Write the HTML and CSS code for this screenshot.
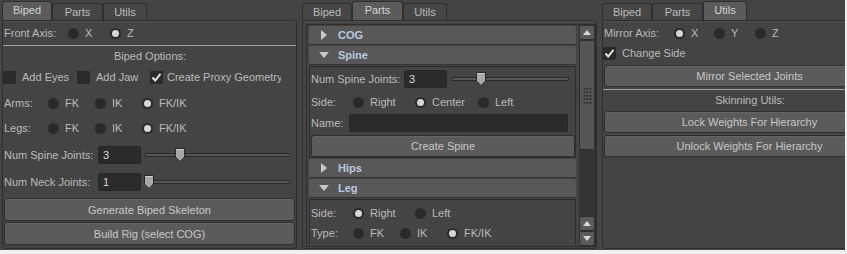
FILE: index.html
```html
<!DOCTYPE html>
<html lang="en">
<head>
    <meta charset="UTF-8">
    <title>Rig Tools</title>
    <link rel="stylesheet" href="styles.css">
</head>
<body>
<div class="app">

    <!-- Biped tab -->
    <div class="panel">
        <div class="tabs">
            <div class="tab active w-biped">Biped</div>
            <div class="tab w-parts">Parts</div>
            <div class="tab w-utils">Utils</div>
        </div>
        <div class="pane">
            <div class="row mt2">
                <span class="lbl w64">Front Axis:</span>
                <span class="opt w42"><span class="radio"></span>X</span>
                <span class="opt w42"><span class="radio on"></span>Z</span>
            </div>
            <div class="sep mt2"></div>
            <div class="row center">Biped Options:</div>
            <div class="row mt1 pl0">
                <span class="opt w74"><span class="check"></span>Add Eyes</span>
                <span class="opt w73"><span class="check"></span>Add Jaw</span>
                <span class="opt clip"><span class="check on"><svg width="13" height="13" viewBox="0 0 13 13"><path d="M2.5 6.5 L5.2 9.5 L10.5 2.8" fill="none" stroke="#e6e6e6" stroke-width="2"/></svg></span>Create Proxy Geometry</span>
            </div>
            <div class="row mt6">
                <span class="lbl w44">Arms:</span>
                <span class="opt w47"><span class="radio"></span>FK</span>
                <span class="opt w47"><span class="radio"></span>IK</span>
                <span class="opt"><span class="radio on"></span>FK/IK</span>
            </div>
            <div class="row mt5">
                <span class="lbl w44">Legs:</span>
                <span class="opt w47"><span class="radio"></span>FK</span>
                <span class="opt w47"><span class="radio"></span>IK</span>
                <span class="opt"><span class="radio on"></span>FK/IK</span>
            </div>
            <div class="row mt7">
                <span class="lbl w94">Num Spine Joints:</span>
                <span class="field num">3</span>
                <div class="slider s-left">
                    <div class="groove"></div>
                    <svg class="handle" style="left: 31px" width="10" height="14" viewBox="0 0 10 14"><path d="M0.5 0.5 H9.5 V9 L5 13.5 L0.5 9 Z" fill="#a8a8a8" stroke="#2a2a2a"/><path d="M1.5 1.5 H8.5" stroke="#d0d0d0"/></svg>
                </div>
            </div>
            <div class="row mt7">
                <span class="lbl w94">Num Neck Joints:</span>
                <span class="field num">1</span>
                <div class="slider s-left">
                    <div class="groove"></div>
                    <svg class="handle" style="left: 0px" width="10" height="14" viewBox="0 0 10 14"><path d="M0.5 0.5 H9.5 V9 L5 13.5 L0.5 9 Z" fill="#a8a8a8" stroke="#2a2a2a"/><path d="M1.5 1.5 H8.5" stroke="#d0d0d0"/></svg>
                </div>
            </div>
            <button class="btn mt6">Generate Biped Skeleton</button>
            <button class="btn mt1">Build Rig (select COG)</button>
        </div>
    </div>

    <!-- Parts tab -->
    <div class="panel">
        <div class="tabs">
            <div class="tab w-biped">Biped</div>
            <div class="tab active w-parts">Parts</div>
            <div class="tab w-utils">Utils</div>
        </div>
        <div class="pane">
            <div class="scrollbox">
                <div class="frames">
                    <div class="fhead"><svg width="6" height="10" viewBox="0 0 6 10"><path d="M0 0 L6 5 L0 10 Z" fill="#c8c8c8"/></svg>COG</div>
                    <div class="fhead"><svg width="10" height="6" viewBox="0 0 10 6"><path d="M0 0 H10 L5 6 Z" fill="#c8c8c8"/></svg>Spine</div>
                    <div class="fbody">
                        <div class="row mt2">
                            <span class="lbl w93">Num Spine Joints:</span>
                            <span class="field num">3</span>
                            <div class="slider s-mid">
                                <div class="groove"></div>
                                <svg class="handle" style="left: 25px" width="10" height="14" viewBox="0 0 10 14"><path d="M0.5 0.5 H9.5 V9 L5 13.5 L0.5 9 Z" fill="#a8a8a8" stroke="#2a2a2a"/><path d="M1.5 1.5 H8.5" stroke="#d0d0d0"/></svg>
                            </div>
                        </div>
                        <div class="row mt3">
                            <span class="lbl w42">Side:</span>
                            <span class="opt w62"><span class="radio"></span>Right</span>
                            <span class="opt w63"><span class="radio on"></span>Center</span>
                            <span class="opt"><span class="radio"></span>Left</span>
                        </div>
                        <div class="row mt1">
                            <span class="lbl w38">Name:</span>
                            <span class="field name"></span>
                        </div>
                        <button class="btn btn-small mt2">Create Spine</button>
                    </div>
                    <div class="fhead"><svg width="6" height="10" viewBox="0 0 6 10"><path d="M0 0 L6 5 L0 10 Z" fill="#c8c8c8"/></svg>Hips</div>
                    <div class="fhead"><svg width="10" height="6" viewBox="0 0 10 6"><path d="M0 0 H10 L5 6 Z" fill="#c8c8c8"/></svg>Leg</div>
                    <div class="fbody open">
                        <div class="row mt3">
                            <span class="lbl w42">Side:</span>
                            <span class="opt w62"><span class="radio on"></span>Right</span>
                            <span class="opt"><span class="radio"></span>Left</span>
                        </div>
                        <div class="row">
                            <span class="lbl w42">Type:</span>
                            <span class="opt w47"><span class="radio"></span>FK</span>
                            <span class="opt w47"><span class="radio"></span>IK</span>
                            <span class="opt"><span class="radio on"></span>FK/IK</span>
                        </div>
                        <div class="row"></div>
                    </div>
                </div>
                <div class="sbar">
                    <div class="sb-btn"><svg width="8" height="5" viewBox="0 0 8 5"><path d="M0 5 L4 0 L8 5 Z" fill="#d8d8d8"/></svg></div>
                    <div class="sb-thumb"><div class="grip"></div></div>
                    <div class="sb-track"></div>
                    <div class="sb-btn"><svg width="8" height="5" viewBox="0 0 8 5"><path d="M0 5 L4 0 L8 5 Z" fill="#d8d8d8"/></svg></div>
                    <div class="sb-btn"><svg width="8" height="5" viewBox="0 0 8 5"><path d="M0 0 L8 0 L4 5 Z" fill="#d8d8d8"/></svg></div>
                </div>
            </div>
        </div>
    </div>

    <!-- Utils tab -->
    <div class="panel">
        <div class="tabs">
            <div class="tab w-biped">Biped</div>
            <div class="tab w-parts">Parts</div>
            <div class="tab active w-utils">Utils</div>
        </div>
        <div class="pane">
            <div class="row mt2">
                <span class="lbl w70">Mirror Axis:</span>
                <span class="opt w40"><span class="radio on"></span>X</span>
                <span class="opt w41"><span class="radio"></span>Y</span>
                <span class="opt"><span class="radio"></span>Z</span>
            </div>
            <div class="row pl0">
                <span class="opt"><span class="check on"><svg width="13" height="13" viewBox="0 0 13 13"><path d="M2.5 6.5 L5.2 9.5 L10.5 2.8" fill="none" stroke="#e6e6e6" stroke-width="2"/></svg></span>Change Side</span>
            </div>
            <button class="btn btn-small mt2">Mirror Selected Joints</button>
            <div class="sep mt2"></div>
            <div class="row center short">Skinning Utils:</div>
            <button class="btn btn-small mt2">Lock Weights For Hierarchy</button>
            <button class="btn btn-small mt2">Unlock Weights For Hierarchy</button>
        </div>
    </div>

</div>
</body>
</html>
```

FILE: styles.css
```css
* {
    box-sizing: border-box;
}
body {
    margin: 0;
    background-color: #f0f0f0;
    font-family: "Liberation Sans", Arial, sans-serif;
    font-size: 11px;
    color: #bbbbbb;
}
.app {
    width: 845px;
    height: 250px;
    display: flex;
    overflow: hidden;
    background-color: #444444;
}
.panel {
    flex: 0 0 300px;
    display: flex;
    flex-direction: column;
}

/* tabs */
.tabs {
    display: flex;
    align-items: flex-end;
    height: 20px;
    padding-left: 2px;
}
.tab {
    height: 17px;
    display: flex;
    align-items: center;
    justify-content: center;
    border: 1px solid #2e2e2e;
    border-bottom: none;
    border-radius: 3px 3px 0 0;
    background-color: #464646;
    color: #bbbbbb;
}
.tab.active {
    height: 19px;
    padding-bottom: 2px;
    background-color: #5b5b5b;
    color: #d4d4d4;
}
.w-biped { width: 50px; }
.w-parts { width: 51px; }
.w-utils { width: 44px; }

.pane {
    flex: 1;
    width: 295px;
    margin-left: 2px;
    margin-bottom: 1px;
    border: 1px solid #2e2e2e;
    border-radius: 3px;
    box-shadow: inset 0 1px 0 #505050;
    display: flex;
    flex-direction: column;
    overflow: hidden;
}

/* rows and controls */
.row {
    display: flex;
    align-items: center;
    height: 20px;
    padding-left: 1px;
    white-space: nowrap;
    flex: none;
}
.row.pl0 { padding-left: 0; }
.row.center { justify-content: center; }
.row.short { height: 19px; }
.lbl { flex: none; }
.opt {
    display: flex;
    align-items: center;
    gap: 6px;
    flex: none;
}
.opt.clip {
    width: 131px;
    gap: 4px;
    overflow: hidden;
}
.w38 { width: 38px; }
.w40 { width: 40px; }
.w41 { width: 41px; }
.w42 { width: 42px; }
.w44 { width: 44px; }
.w47 { width: 47px; }
.w62 { width: 62px; }
.w63 { width: 63px; }
.w64 { width: 64px; }
.w70 { width: 70px; }
.w73 { width: 73px; }
.w74 { width: 74px; }
.w93 { width: 93px; }
.w94 { width: 94px; }

.mt1 { margin-top: 1px; }
.mt2 { margin-top: 2px; }
.mt3 { margin-top: 3px; }
.mt5 { margin-top: 5px; }
.mt6 { margin-top: 6px; }
.mt7 { margin-top: 7px; }

.radio {
    width: 11px;
    height: 11px;
    border-radius: 50%;
    background-color: #2a2a2a;
    display: flex;
    align-items: center;
    justify-content: center;
    flex: none;
}
.radio.on::after {
    content: "";
    width: 7px;
    height: 7px;
    border-radius: 50%;
    background-color: #d6d6d6;
}
.check {
    width: 13px;
    height: 13px;
    border-radius: 1px;
    background-color: #2a2a2a;
    flex: none;
    display: flex;
}
.sep {
    height: 1px;
    background-color: #a2a2a2;
    flex: none;
}
.field {
    height: 18px;
    background-color: #2b2b2b;
    border: 1px solid #262626;
    border-radius: 2px;
    color: #d8d8d8;
    display: flex;
    align-items: center;
    flex: none;
}
.field.num {
    width: 43px;
    padding-left: 4px;
}
.field.name {
    width: 219px;
}
.slider {
    position: relative;
    height: 20px;
    flex: none;
    display: flex;
    align-items: center;
}
.s-left {
    width: 147px;
    margin-left: 3px;
}
.s-mid {
    width: 118px;
    margin-left: 4px;
}
.groove {
    width: 100%;
    height: 4px;
    border: 1px solid #2a2a2a;
    border-radius: 2px;
    background-color: #575757;
}
.handle {
    position: absolute;
    top: 3px;
}

.btn {
    display: block;
    flex: none;
    height: 23px;
    margin-left: 1px;
    margin-right: 1px;
    border: 1px solid #2e2e2e;
    border-radius: 3px;
    background-color: #5b5b5b;
    box-shadow: inset 0 1px 0 #666666;
    color: #c8c8c8;
    font-family: inherit;
    font-size: 11px;
    padding: 0;
}
.btn-small {
    height: 22px;
}

/* Parts tab: scroll area with frame layouts */
.scrollbox {
    flex: 1;
    display: flex;
    margin: 3px 0 1px 3px;
    border: 1px solid #2e2e2e;
    overflow: hidden;
}
.frames {
    flex: 1;
    padding: 1px 3px 0 2px;
    overflow: hidden;
}
.fhead {
    height: 19px;
    margin-bottom: 1px;
    display: flex;
    align-items: center;
    padding-left: 10px;
    gap: 9px;
    background-color: #585858;
    border-radius: 2px;
    border-bottom: 1px solid #333333;
    color: #b9c9e2;
    font-weight: bold;
}
.fhead svg {
    width: 10px;
}
.fbody {
    border: 1px solid #2e2e2e;
    border-top-color: #2a2a2a;
    padding-bottom: 0;
    margin-bottom: 1px;
    display: flex;
    flex-direction: column;
}
.fbody .btn {
    margin-left: 1px;
    margin-right: 0;
}
.fbody.open {
    margin-top: 0;
}

.sbar {
    width: 16px;
    display: flex;
    flex-direction: column;
    flex: none;
}
.sb-btn {
    height: 15px;
    flex: none;
    display: flex;
    align-items: center;
    justify-content: center;
    background-color: #5a5a5a;
    border: 1px solid #2e2e2e;
    border-radius: 2px;
}
.sb-thumb {
    height: 110px;
    flex: none;
    display: flex;
    align-items: center;
    justify-content: center;
    background-color: #565656;
    border: 1px solid #2e2e2e;
    border-radius: 2px;
}
.grip {
    width: 9px;
    height: 17px;
    margin-left: 1px;
    background-image: radial-gradient(circle, #2a2a2a 0.9px, transparent 1.2px);
    background-size: 3px 3.5px;
}
.sb-track {
    flex: 1;
    background: repeating-conic-gradient(#3c3c3c 0 25%, #2c2c2c 0 50%) 0 0 / 2px 2px;
}
```
